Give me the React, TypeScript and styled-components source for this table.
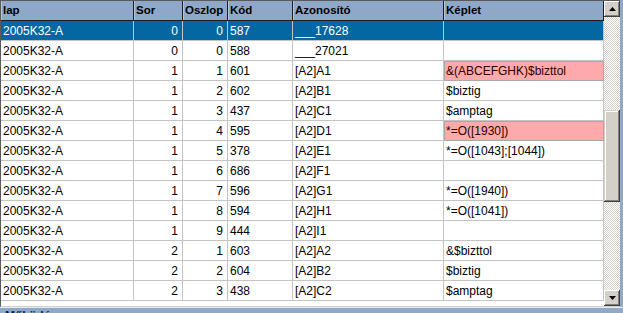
import React from 'react';
import styled, { createGlobalStyle } from 'styled-components';

interface Row {
  lap: string
  sor: number
  oszlop: number
  kod: string
  azon: string
  keplet: string
  hot?: boolean
}

const rows: Row[] = [
  { lap: '2005K32-A', sor: 0, oszlop: 0, kod: '587', azon: '___17628', keplet: '' },
  { lap: '2005K32-A', sor: 0, oszlop: 0, kod: '588', azon: '___27021', keplet: '' },
  { lap: '2005K32-A', sor: 1, oszlop: 1, kod: '601', azon: '[A2]A1', keplet: '&(ABCEFGHK)$bizttol', hot: true },
  { lap: '2005K32-A', sor: 1, oszlop: 2, kod: '602', azon: '[A2]B1', keplet: '$biztig' },
  { lap: '2005K32-A', sor: 1, oszlop: 3, kod: '437', azon: '[A2]C1', keplet: '$amptag' },
  { lap: '2005K32-A', sor: 1, oszlop: 4, kod: '595', azon: '[A2]D1', keplet: '*=O([1930])', hot: true },
  { lap: '2005K32-A', sor: 1, oszlop: 5, kod: '378', azon: '[A2]E1', keplet: '*=O([1043];[1044])' },
  { lap: '2005K32-A', sor: 1, oszlop: 6, kod: '686', azon: '[A2]F1', keplet: '' },
  { lap: '2005K32-A', sor: 1, oszlop: 7, kod: '596', azon: '[A2]G1', keplet: '*=O([1940])' },
  { lap: '2005K32-A', sor: 1, oszlop: 8, kod: '594', azon: '[A2]H1', keplet: '*=O([1041])' },
  { lap: '2005K32-A', sor: 1, oszlop: 9, kod: '444', azon: '[A2]I1', keplet: '' },
  { lap: '2005K32-A', sor: 2, oszlop: 1, kod: '603', azon: '[A2]A2', keplet: '&$bizttol' },
  { lap: '2005K32-A', sor: 2, oszlop: 2, kod: '604', azon: '[A2]B2', keplet: '$biztig' },
  { lap: '2005K32-A', sor: 2, oszlop: 3, kod: '438', azon: '[A2]C2', keplet: '$amptag' },
];

const GlobalStyle = createGlobalStyle`
  html, body {
    margin: 0;
    padding: 0;
    background: #8fa9cb;
    font-family: "Liberation Sans", Arial, sans-serif;
  }
`;

const Page = styled.div`
  display: flex;
  flex-direction: column;
  width: 623px;
  height: 313px;
  overflow: hidden;
`;

const Frame = styled.div`
  display: flex;
  width: 620px;
  height: 309px;
  box-sizing: border-box;
  background: #fff;
  border-top: 1px solid #5a5a5a;
  border-left: 1px solid #5a5a5a;
  border-bottom: 1px solid #d4d0c8;
`;

const Grid = styled.div`
  width: 603px;
  display: flex;
  flex-direction: column;
`;

const Line = styled.div`
  display: grid;
  grid-template-columns: 133px 49px 45px 65px 151px 160px;
`;

const HeadCell = styled.div`
  height: 20px;
  box-sizing: border-box;
  background: #8fa8c9;
  border-right: 1px solid #1e1e1e;
  border-bottom: 1px solid #1e1e1e;
  box-shadow: inset 1px 0 0 #b4c5dc;
  padding: 0 2px;
  font-size: 11.5px;
  font-weight: bold;
  line-height: 19px;
  color: #000;
  white-space: nowrap;
  overflow: hidden;
`;

const Cell = styled.div<{ $num?: boolean; $sel?: boolean; $hot?: boolean }>`
  height: 20px;
  box-sizing: border-box;
  border-right: 1px solid ${p => (p.$hot ? '#a8a8a8' : '#c4c4c4')};
  border-bottom: 1px solid ${p => (p.$hot ? '#a8a8a8' : '#c4c4c4')};
  background: ${p => (p.$sel ? '#0467a2' : p.$hot ? '#ffaaaa' : '#fff')};
  box-shadow: ${p => (p.$hot ? 'inset 1px 1px 0 #a8a8a8' : 'none')};
  color: ${p => (p.$sel ? '#fff' : p.$hot ? '#2a0000' : '#000')};
  text-align: ${p => (p.$num ? 'right' : 'left')};
  padding: ${p => (p.$num ? '0 4px 0 0' : '0 0 0 2px')};
  font-size: 12px;
  line-height: 20px;
  white-space: nowrap;
  overflow: hidden;
`;

const ScrollBar = styled.div`
  width: 16px;
  display: flex;
  flex-direction: column;
`;

const Track = styled.div`
  flex: 1;
  display: flex;
  flex-direction: column;
  background: repeating-conic-gradient(#d4d0c8 0 25%, #fff 0 50%) 0 0 / 2px 2px;
`;

const ArrowBtn = styled.div`
  width: 16px;
  height: 16px;
  box-sizing: border-box;
  display: flex;
  align-items: center;
  justify-content: center;
  background: #d4d0c8;
  box-shadow: inset -1px -1px 0 #404040, inset 1px 1px 0 #fff, inset -2px -2px 0 #808080;
`;

const Thumb = styled.div`
  width: 16px;
  box-sizing: border-box;
  background: #d4d0c8;
  box-shadow: inset -1px -1px 0 #404040, inset 1px 1px 0 #d4d0c8, inset -2px -2px 0 #808080, inset 2px 2px 0 #fff;
`;

const Footer = styled.div`
  height: 4px;
  border-top: 1px solid #e8ecf2;
  background: #8fa9cb;
  padding: 1px 0 0 5px;
  font-size: 12px;
  font-weight: bold;
  line-height: 14px;
  color: #10203a;
`;

const Arrow: React.FC<{ down?: boolean }> = ({ down }) => (
  <svg width='7' height='4' viewBox='0 0 7 4'>
    <polygon points={down ? '0,0 7,0 3.5,4' : '3.5,0 7,4 0,4'} fill='#000' />
  </svg>
);

const App: React.FC = () => {
  // thumb placement: start and size in track pixels
  const thumbTop = 93;
  const thumbHeight = 92;

  return (
    <>
      <GlobalStyle />
      <Page>
        <Frame>
          <Grid>
            <Line>
              <HeadCell>lap</HeadCell>
              <HeadCell>Sor</HeadCell>
              <HeadCell>Oszlop</HeadCell>
              <HeadCell>Kód</HeadCell>
              <HeadCell>Azonosító</HeadCell>
              <HeadCell>Képlet</HeadCell>
            </Line>
            {rows.map((r, i) => {
              const sel = i === 0;
              return (
                <Line key={r.kod}>
                  <Cell $sel={sel}>{r.lap}</Cell>
                  <Cell $sel={sel} $num>{r.sor}</Cell>
                  <Cell $sel={sel} $num>{r.oszlop}</Cell>
                  <Cell $sel={sel}>{r.kod}</Cell>
                  <Cell $sel={sel}>{r.azon}</Cell>
                  <Cell $sel={sel} $hot={r.hot}>{r.keplet}</Cell>
                </Line>
              );
            })}
          </Grid>

          <ScrollBar>
            <ArrowBtn><Arrow /></ArrowBtn>
            <Track>
              <Thumb style={{ marginTop: thumbTop, height: thumbHeight }} />
            </Track>
            <ArrowBtn><Arrow down /></ArrowBtn>
          </ScrollBar>
        </Frame>
        <Footer>Működés</Footer>
      </Page>
    </>
  );
};

export default App;
